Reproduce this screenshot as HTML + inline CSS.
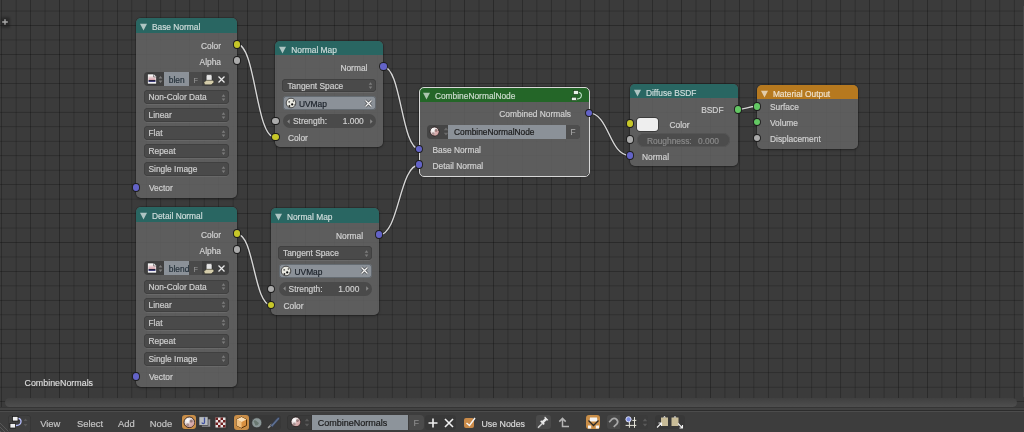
<!DOCTYPE html><html><head><meta charset="utf-8"><style>html,body{margin:0;padding:0}body{width:1024px;height:432px;overflow:hidden;position:relative;background:#3b3b3b;font-family:"Liberation Sans", sans-serif;-webkit-font-smoothing:antialiased}</style></head><body><div style="position:absolute;left:0;top:0;width:1024px;height:432px;will-change:transform">
<svg style="position:absolute;left:0;top:0" width="1024" height="432" shape-rendering="crispEdges"><rect x="-14" y="0" width="1" height="412" fill="#000" fill-opacity="0.044"/><rect x="-13" y="0" width="1" height="412" fill="#000" fill-opacity="0.146"/><rect x="1" y="0" width="1" height="412" fill="#000" fill-opacity="0.225"/><rect x="15" y="0" width="1" height="412" fill="#000" fill-opacity="0.060"/><rect x="16" y="0" width="1" height="412" fill="#000" fill-opacity="0.122"/><rect x="30" y="0" width="1" height="412" fill="#000" fill-opacity="0.256"/><rect x="44" y="0" width="1" height="412" fill="#000" fill-opacity="0.079"/><rect x="45" y="0" width="1" height="412" fill="#000" fill-opacity="0.099"/><rect x="59" y="0" width="1" height="412" fill="#000" fill-opacity="0.288"/><rect x="73" y="0" width="1" height="412" fill="#000" fill-opacity="0.099"/><rect x="74" y="0" width="1" height="412" fill="#000" fill-opacity="0.079"/><rect x="88" y="0" width="1" height="412" fill="#000" fill-opacity="0.256"/><rect x="102" y="0" width="1" height="412" fill="#000" fill-opacity="0.122"/><rect x="103" y="0" width="1" height="412" fill="#000" fill-opacity="0.060"/><rect x="117" y="0" width="1" height="412" fill="#000" fill-opacity="0.225"/><rect x="131" y="0" width="1" height="412" fill="#000" fill-opacity="0.146"/><rect x="132" y="0" width="1" height="412" fill="#000" fill-opacity="0.044"/><rect x="145" y="0" width="1" height="412" fill="#000" fill-opacity="0.019"/><rect x="146" y="0" width="1" height="412" fill="#000" fill-opacity="0.196"/><rect x="160" y="0" width="1" height="412" fill="#000" fill-opacity="0.172"/><rect x="161" y="0" width="1" height="412" fill="#000" fill-opacity="0.030"/><rect x="174" y="0" width="1" height="412" fill="#000" fill-opacity="0.032"/><rect x="175" y="0" width="1" height="412" fill="#000" fill-opacity="0.168"/><rect x="189" y="0" width="1" height="412" fill="#000" fill-opacity="0.200"/><rect x="190" y="0" width="1" height="412" fill="#000" fill-opacity="0.018"/><rect x="203" y="0" width="1" height="412" fill="#000" fill-opacity="0.046"/><rect x="204" y="0" width="1" height="412" fill="#000" fill-opacity="0.142"/><rect x="218" y="0" width="1" height="412" fill="#000" fill-opacity="0.229"/><rect x="232" y="0" width="1" height="412" fill="#000" fill-opacity="0.063"/><rect x="233" y="0" width="1" height="412" fill="#000" fill-opacity="0.118"/><rect x="247" y="0" width="1" height="412" fill="#000" fill-opacity="0.260"/><rect x="261" y="0" width="1" height="412" fill="#000" fill-opacity="0.082"/><rect x="262" y="0" width="1" height="412" fill="#000" fill-opacity="0.096"/><rect x="276" y="0" width="1" height="412" fill="#000" fill-opacity="0.283"/><rect x="290" y="0" width="1" height="412" fill="#000" fill-opacity="0.102"/><rect x="291" y="0" width="1" height="412" fill="#000" fill-opacity="0.076"/><rect x="305" y="0" width="1" height="412" fill="#000" fill-opacity="0.251"/><rect x="319" y="0" width="1" height="412" fill="#000" fill-opacity="0.125"/><rect x="320" y="0" width="1" height="412" fill="#000" fill-opacity="0.058"/><rect x="333" y="0" width="1" height="412" fill="#000" fill-opacity="0.011"/><rect x="334" y="0" width="1" height="412" fill="#000" fill-opacity="0.220"/><rect x="348" y="0" width="1" height="412" fill="#000" fill-opacity="0.150"/><rect x="349" y="0" width="1" height="412" fill="#000" fill-opacity="0.042"/><rect x="362" y="0" width="1" height="412" fill="#000" fill-opacity="0.021"/><rect x="363" y="0" width="1" height="412" fill="#000" fill-opacity="0.191"/><rect x="377" y="0" width="1" height="412" fill="#000" fill-opacity="0.176"/><rect x="378" y="0" width="1" height="412" fill="#000" fill-opacity="0.028"/><rect x="391" y="0" width="1" height="412" fill="#000" fill-opacity="0.033"/><rect x="392" y="0" width="1" height="412" fill="#000" fill-opacity="0.164"/><rect x="406" y="0" width="1" height="412" fill="#000" fill-opacity="0.204"/><rect x="407" y="0" width="1" height="412" fill="#000" fill-opacity="0.016"/><rect x="420" y="0" width="1" height="412" fill="#000" fill-opacity="0.048"/><rect x="421" y="0" width="1" height="412" fill="#000" fill-opacity="0.139"/><rect x="435" y="0" width="1" height="412" fill="#000" fill-opacity="0.234"/><rect x="449" y="0" width="1" height="412" fill="#000" fill-opacity="0.065"/><rect x="450" y="0" width="1" height="412" fill="#000" fill-opacity="0.115"/><rect x="464" y="0" width="1" height="412" fill="#000" fill-opacity="0.265"/><rect x="478" y="0" width="1" height="412" fill="#000" fill-opacity="0.085"/><rect x="479" y="0" width="1" height="412" fill="#000" fill-opacity="0.093"/><rect x="493" y="0" width="1" height="412" fill="#000" fill-opacity="0.278"/><rect x="507" y="0" width="1" height="412" fill="#000" fill-opacity="0.106"/><rect x="508" y="0" width="1" height="412" fill="#000" fill-opacity="0.073"/><rect x="522" y="0" width="1" height="412" fill="#000" fill-opacity="0.246"/><rect x="536" y="0" width="1" height="412" fill="#000" fill-opacity="0.129"/><rect x="537" y="0" width="1" height="412" fill="#000" fill-opacity="0.055"/><rect x="550" y="0" width="1" height="412" fill="#000" fill-opacity="0.012"/><rect x="551" y="0" width="1" height="412" fill="#000" fill-opacity="0.216"/><rect x="565" y="0" width="1" height="412" fill="#000" fill-opacity="0.153"/><rect x="566" y="0" width="1" height="412" fill="#000" fill-opacity="0.039"/><rect x="579" y="0" width="1" height="412" fill="#000" fill-opacity="0.023"/><rect x="580" y="0" width="1" height="412" fill="#000" fill-opacity="0.187"/><rect x="594" y="0" width="1" height="412" fill="#000" fill-opacity="0.180"/><rect x="595" y="0" width="1" height="412" fill="#000" fill-opacity="0.026"/><rect x="608" y="0" width="1" height="412" fill="#000" fill-opacity="0.036"/><rect x="609" y="0" width="1" height="412" fill="#000" fill-opacity="0.160"/><rect x="623" y="0" width="1" height="412" fill="#000" fill-opacity="0.208"/><rect x="624" y="0" width="1" height="412" fill="#000" fill-opacity="0.015"/><rect x="637" y="0" width="1" height="412" fill="#000" fill-opacity="0.051"/><rect x="638" y="0" width="1" height="412" fill="#000" fill-opacity="0.135"/><rect x="652" y="0" width="1" height="412" fill="#000" fill-opacity="0.238"/><rect x="666" y="0" width="1" height="412" fill="#000" fill-opacity="0.068"/><rect x="667" y="0" width="1" height="412" fill="#000" fill-opacity="0.111"/><rect x="681" y="0" width="1" height="412" fill="#000" fill-opacity="0.270"/><rect x="695" y="0" width="1" height="412" fill="#000" fill-opacity="0.087"/><rect x="696" y="0" width="1" height="412" fill="#000" fill-opacity="0.090"/><rect x="710" y="0" width="1" height="412" fill="#000" fill-opacity="0.274"/><rect x="724" y="0" width="1" height="412" fill="#000" fill-opacity="0.109"/><rect x="725" y="0" width="1" height="412" fill="#000" fill-opacity="0.070"/><rect x="739" y="0" width="1" height="412" fill="#000" fill-opacity="0.242"/><rect x="753" y="0" width="1" height="412" fill="#000" fill-opacity="0.132"/><rect x="754" y="0" width="1" height="412" fill="#000" fill-opacity="0.053"/><rect x="767" y="0" width="1" height="412" fill="#000" fill-opacity="0.014"/><rect x="768" y="0" width="1" height="412" fill="#000" fill-opacity="0.212"/><rect x="782" y="0" width="1" height="412" fill="#000" fill-opacity="0.157"/><rect x="783" y="0" width="1" height="412" fill="#000" fill-opacity="0.037"/><rect x="796" y="0" width="1" height="412" fill="#000" fill-opacity="0.024"/><rect x="797" y="0" width="1" height="412" fill="#000" fill-opacity="0.183"/><rect x="811" y="0" width="1" height="412" fill="#000" fill-opacity="0.184"/><rect x="812" y="0" width="1" height="412" fill="#000" fill-opacity="0.024"/><rect x="825" y="0" width="1" height="412" fill="#000" fill-opacity="0.038"/><rect x="826" y="0" width="1" height="412" fill="#000" fill-opacity="0.156"/><rect x="840" y="0" width="1" height="412" fill="#000" fill-opacity="0.212"/><rect x="841" y="0" width="1" height="412" fill="#000" fill-opacity="0.013"/><rect x="854" y="0" width="1" height="412" fill="#000" fill-opacity="0.053"/><rect x="855" y="0" width="1" height="412" fill="#000" fill-opacity="0.131"/><rect x="869" y="0" width="1" height="412" fill="#000" fill-opacity="0.243"/><rect x="883" y="0" width="1" height="412" fill="#000" fill-opacity="0.071"/><rect x="884" y="0" width="1" height="412" fill="#000" fill-opacity="0.108"/><rect x="898" y="0" width="1" height="412" fill="#000" fill-opacity="0.275"/><rect x="912" y="0" width="1" height="412" fill="#000" fill-opacity="0.091"/><rect x="913" y="0" width="1" height="412" fill="#000" fill-opacity="0.087"/><rect x="927" y="0" width="1" height="412" fill="#000" fill-opacity="0.269"/><rect x="941" y="0" width="1" height="412" fill="#000" fill-opacity="0.112"/><rect x="942" y="0" width="1" height="412" fill="#000" fill-opacity="0.068"/><rect x="956" y="0" width="1" height="412" fill="#000" fill-opacity="0.237"/><rect x="970" y="0" width="1" height="412" fill="#000" fill-opacity="0.136"/><rect x="971" y="0" width="1" height="412" fill="#000" fill-opacity="0.050"/><rect x="984" y="0" width="1" height="412" fill="#000" fill-opacity="0.015"/><rect x="985" y="0" width="1" height="412" fill="#000" fill-opacity="0.207"/><rect x="999" y="0" width="1" height="412" fill="#000" fill-opacity="0.161"/><rect x="1000" y="0" width="1" height="412" fill="#000" fill-opacity="0.035"/><rect x="1013" y="0" width="1" height="412" fill="#000" fill-opacity="0.026"/><rect x="1014" y="0" width="1" height="412" fill="#000" fill-opacity="0.179"/><rect x="0" y="-4" width="1024" height="1" fill="#000" fill-opacity="0.256"/><rect x="0" y="10" width="1024" height="1" fill="#000" fill-opacity="0.079"/><rect x="0" y="11" width="1024" height="1" fill="#000" fill-opacity="0.099"/><rect x="0" y="25" width="1024" height="1" fill="#000" fill-opacity="0.288"/><rect x="0" y="39" width="1024" height="1" fill="#000" fill-opacity="0.099"/><rect x="0" y="40" width="1024" height="1" fill="#000" fill-opacity="0.079"/><rect x="0" y="54" width="1024" height="1" fill="#000" fill-opacity="0.256"/><rect x="0" y="68" width="1024" height="1" fill="#000" fill-opacity="0.122"/><rect x="0" y="69" width="1024" height="1" fill="#000" fill-opacity="0.060"/><rect x="0" y="83" width="1024" height="1" fill="#000" fill-opacity="0.225"/><rect x="0" y="97" width="1024" height="1" fill="#000" fill-opacity="0.146"/><rect x="0" y="98" width="1024" height="1" fill="#000" fill-opacity="0.044"/><rect x="0" y="111" width="1024" height="1" fill="#000" fill-opacity="0.019"/><rect x="0" y="112" width="1024" height="1" fill="#000" fill-opacity="0.196"/><rect x="0" y="126" width="1024" height="1" fill="#000" fill-opacity="0.172"/><rect x="0" y="127" width="1024" height="1" fill="#000" fill-opacity="0.030"/><rect x="0" y="140" width="1024" height="1" fill="#000" fill-opacity="0.032"/><rect x="0" y="141" width="1024" height="1" fill="#000" fill-opacity="0.168"/><rect x="0" y="155" width="1024" height="1" fill="#000" fill-opacity="0.200"/><rect x="0" y="156" width="1024" height="1" fill="#000" fill-opacity="0.018"/><rect x="0" y="169" width="1024" height="1" fill="#000" fill-opacity="0.046"/><rect x="0" y="170" width="1024" height="1" fill="#000" fill-opacity="0.142"/><rect x="0" y="184" width="1024" height="1" fill="#000" fill-opacity="0.229"/><rect x="0" y="198" width="1024" height="1" fill="#000" fill-opacity="0.063"/><rect x="0" y="199" width="1024" height="1" fill="#000" fill-opacity="0.118"/><rect x="0" y="213" width="1024" height="1" fill="#000" fill-opacity="0.260"/><rect x="0" y="227" width="1024" height="1" fill="#000" fill-opacity="0.082"/><rect x="0" y="228" width="1024" height="1" fill="#000" fill-opacity="0.096"/><rect x="0" y="242" width="1024" height="1" fill="#000" fill-opacity="0.283"/><rect x="0" y="256" width="1024" height="1" fill="#000" fill-opacity="0.102"/><rect x="0" y="257" width="1024" height="1" fill="#000" fill-opacity="0.076"/><rect x="0" y="271" width="1024" height="1" fill="#000" fill-opacity="0.251"/><rect x="0" y="285" width="1024" height="1" fill="#000" fill-opacity="0.125"/><rect x="0" y="286" width="1024" height="1" fill="#000" fill-opacity="0.058"/><rect x="0" y="299" width="1024" height="1" fill="#000" fill-opacity="0.011"/><rect x="0" y="300" width="1024" height="1" fill="#000" fill-opacity="0.220"/><rect x="0" y="314" width="1024" height="1" fill="#000" fill-opacity="0.150"/><rect x="0" y="315" width="1024" height="1" fill="#000" fill-opacity="0.042"/><rect x="0" y="328" width="1024" height="1" fill="#000" fill-opacity="0.021"/><rect x="0" y="329" width="1024" height="1" fill="#000" fill-opacity="0.191"/><rect x="0" y="343" width="1024" height="1" fill="#000" fill-opacity="0.176"/><rect x="0" y="344" width="1024" height="1" fill="#000" fill-opacity="0.028"/><rect x="0" y="357" width="1024" height="1" fill="#000" fill-opacity="0.033"/><rect x="0" y="358" width="1024" height="1" fill="#000" fill-opacity="0.164"/><rect x="0" y="372" width="1024" height="1" fill="#000" fill-opacity="0.204"/><rect x="0" y="373" width="1024" height="1" fill="#000" fill-opacity="0.016"/><rect x="0" y="386" width="1024" height="1" fill="#000" fill-opacity="0.048"/><rect x="0" y="387" width="1024" height="1" fill="#000" fill-opacity="0.139"/><rect x="0" y="401" width="1024" height="1" fill="#000" fill-opacity="0.234"/></svg>
<svg style="position:absolute;left:0;top:0" width="1024" height="432"><path d="M236.8 44 C255.75 44 255.75 137.2 274.7 137.2" stroke="#222" stroke-width="2.6" fill="none" opacity="0.5"/><path d="M236.8 44 C255.75 44 255.75 137.2 274.7 137.2" stroke="#d6d6d6" stroke-width="1.4" fill="none"/><path d="M237 234 C254.0 234 254.0 305 271 305" stroke="#222" stroke-width="2.6" fill="none" opacity="0.5"/><path d="M237 234 C254.0 234 254.0 305 271 305" stroke="#d6d6d6" stroke-width="1.4" fill="none"/><path d="M383.3 66.7 C401.35 66.7 401.35 149.2 419.4 149.2" stroke="#222" stroke-width="2.6" fill="none" opacity="0.5"/><path d="M383.3 66.7 C401.35 66.7 401.35 149.2 419.4 149.2" stroke="#d6d6d6" stroke-width="1.4" fill="none"/><path d="M379 235 C399.2 235 399.2 164.7 419.4 164.7" stroke="#222" stroke-width="2.6" fill="none" opacity="0.5"/><path d="M379 235 C399.2 235 399.2 164.7 419.4 164.7" stroke="#d6d6d6" stroke-width="1.4" fill="none"/><path d="M588.6 112.9 C609.1500000000001 112.9 609.1500000000001 155.6 629.7 155.6" stroke="#222" stroke-width="2.6" fill="none" opacity="0.5"/><path d="M588.6 112.9 C609.1500000000001 112.9 609.1500000000001 155.6 629.7 155.6" stroke="#d6d6d6" stroke-width="1.4" fill="none"/><path d="M737.9 109.3 C747.15 109.3 747.15 106.5 756.4 106.5" stroke="#222" stroke-width="2.6" fill="none" opacity="0.5"/><path d="M737.9 109.3 C747.15 109.3 747.15 106.5 756.4 106.5" stroke="#d6d6d6" stroke-width="1.4" fill="none"/></svg>
<div style="position:absolute;left:136px;top:18.3px;width:101px;height:179.5px;border-radius:5px;box-shadow:0 0 0 0.8px rgba(20,20,20,0.35),0 1px 3px rgba(0,0,0,0.3);background:rgba(103,103,103,0.8)"></div>
<div style="position:absolute;left:136px;top:18.3px;width:101px;height:14.5px;border-radius:5px 5px 0 0;background:#296662"></div>
<svg style="position:absolute;left:139px;top:22.3px" width="10" height="10"><path d="M1 1.8 L8 1.8 L4.5 8.4 Z" fill="#cfdddc" opacity="0.8"/></svg>
<div style="position:absolute;left:151.9px;top:23.2px;font-size:8.4px;line-height:8.4px;color:#cfdddc;white-space:nowrap;-webkit-text-stroke:0.18px #cfdddc;">Base Normal</div>
<div style="position:absolute;right:803px;top:41.599999999999994px;font-size:8.4px;line-height:8.4px;color:#d2d2d2;white-space:nowrap;text-align:right;-webkit-text-stroke:0.18px #d2d2d2;">Color</div>
<div style="position:absolute;right:803px;top:57.599999999999994px;font-size:8.4px;line-height:8.4px;color:#d2d2d2;white-space:nowrap;text-align:right;-webkit-text-stroke:0.18px #d2d2d2;">Alpha</div>
<div style="position:absolute;left:233.7px;top:41.0px;width:6.6px;height:6.6px;border-radius:50%;background:#c7c729;box-shadow:0 0 0 0.9px #1c1c1c"></div>
<div style="position:absolute;left:233.7px;top:57.0px;width:6.6px;height:6.6px;border-radius:50%;background:#ababab;box-shadow:0 0 0 0.9px #1c1c1c"></div>
<div style="position:absolute;left:143.5px;top:72.3px;width:85.5px;height:13.5px;border-radius:4px;background:#3f3f3f"></div>
<div style="position:absolute;left:164.0px;top:72.3px;width:25px;height:13.5px;background:#8b9198"></div>
<div style="position:absolute;left:168.8px;top:75.69999999999999px;font-size:8.4px;line-height:8.4px;color:#24303a;white-space:nowrap;-webkit-text-stroke:0.18px #24303a;">blen</div>
<div style="position:absolute;left:189.0px;top:72.3px;width:13px;height:13.5px;background:#4a4a4a"></div>
<div style="position:absolute;left:193.5px;top:76.5px;font-size:7.4px;line-height:7.4px;color:#9a9a9a;white-space:nowrap;-webkit-text-stroke:0.18px #9a9a9a;-webkit-text-stroke:0">F</div>
<svg style="position:absolute;left:146.0px;top:73.3px" width="12" height="12"><defs><linearGradient id="ig72" x1="0" y1="0" x2="0" y2="1"><stop offset="0" stop-color="#f4e8e8"/><stop offset="0.5" stop-color="#d8a8b0"/><stop offset="0.62" stop-color="#1a1a30"/><stop offset="0.8" stop-color="#404080"/><stop offset="0.85" stop-color="#f0f0f4"/></linearGradient></defs><path d="M1.5 1 H7.5 L10.5 4 V11 H1.5 Z" fill="#f4f4f4" stroke="#222" stroke-width="0.6"/><rect x="2.5" y="3" width="7" height="7" fill="url(#ig72)"/><path d="M7.5 1 V4 H10.5" fill="#ddd" stroke="#444" stroke-width="0.5"/></svg>
<svg style="position:absolute;left:157.5px;top:74.8px" width="5" height="9"><path d="M0.6 3.6 L2.5 1 L4.4 3.6 Z M0.6 5.4 L2.5 8 L4.4 5.4 Z" fill="#7e7e7e"/></svg>
<svg style="position:absolute;left:203.0px;top:72.8px" width="12" height="13"><path d="M3.2 7.8 L3.2 3 Q3.2 1.6 4.6 1.6 L7.6 1.6 Q9 1.6 9 3 L9 7.8 Z" fill="#e4e4e4" stroke="#222" stroke-width="0.5"/><path d="M0.8 9.3 L3.5 7.3 L9.8 7.3 L11.2 9 L8.2 11.8 L1.8 11.8 Z" fill="#d4ccaa" stroke="#2a2a20" stroke-width="0.5"/></svg>
<svg style="position:absolute;left:217.0px;top:74.6px" width="9" height="9"><path d="M1.5 1.5 L7.5 7.5 M7.5 1.5 L1.5 7.5" stroke="#e8e8e8" stroke-width="1.3"/></svg>
<div style="position:absolute;left:143.5px;top:90.3px;width:85.5px;height:14.0px;border-radius:4px;background:#4a4a4a;box-shadow:inset 0 0 0 0.7px #3e3e3e,0 1px 0 rgba(255,255,255,0.07)"></div>
<div style="position:absolute;left:148.5px;top:93.3px;font-size:8.4px;line-height:8.4px;color:#d0d0d0;white-space:nowrap;-webkit-text-stroke:0.18px #d0d0d0;">Non-Color Data</div>
<svg style="position:absolute;left:221.2px;top:92.8px" width="5" height="9"><path d="M0.7 3.7 L2.5 1.2 L4.3 3.7 Z M0.7 5.5 L2.5 8 L4.3 5.5 Z" fill="#7c7c7c"/></svg>
<div style="position:absolute;left:143.5px;top:108.3px;width:85.5px;height:14.0px;border-radius:4px;background:#4a4a4a;box-shadow:inset 0 0 0 0.7px #3e3e3e,0 1px 0 rgba(255,255,255,0.07)"></div>
<div style="position:absolute;left:148.5px;top:111.3px;font-size:8.4px;line-height:8.4px;color:#d0d0d0;white-space:nowrap;-webkit-text-stroke:0.18px #d0d0d0;">Linear</div>
<svg style="position:absolute;left:221.2px;top:110.8px" width="5" height="9"><path d="M0.7 3.7 L2.5 1.2 L4.3 3.7 Z M0.7 5.5 L2.5 8 L4.3 5.5 Z" fill="#7c7c7c"/></svg>
<div style="position:absolute;left:143.5px;top:126.3px;width:85.5px;height:14.0px;border-radius:4px;background:#4a4a4a;box-shadow:inset 0 0 0 0.7px #3e3e3e,0 1px 0 rgba(255,255,255,0.07)"></div>
<div style="position:absolute;left:148.5px;top:129.3px;font-size:8.4px;line-height:8.4px;color:#d0d0d0;white-space:nowrap;-webkit-text-stroke:0.18px #d0d0d0;">Flat</div>
<svg style="position:absolute;left:221.2px;top:128.8px" width="5" height="9"><path d="M0.7 3.7 L2.5 1.2 L4.3 3.7 Z M0.7 5.5 L2.5 8 L4.3 5.5 Z" fill="#7c7c7c"/></svg>
<div style="position:absolute;left:143.5px;top:144.3px;width:85.5px;height:14.0px;border-radius:4px;background:#4a4a4a;box-shadow:inset 0 0 0 0.7px #3e3e3e,0 1px 0 rgba(255,255,255,0.07)"></div>
<div style="position:absolute;left:148.5px;top:147.3px;font-size:8.4px;line-height:8.4px;color:#d0d0d0;white-space:nowrap;-webkit-text-stroke:0.18px #d0d0d0;">Repeat</div>
<svg style="position:absolute;left:221.2px;top:146.8px" width="5" height="9"><path d="M0.7 3.7 L2.5 1.2 L4.3 3.7 Z M0.7 5.5 L2.5 8 L4.3 5.5 Z" fill="#7c7c7c"/></svg>
<div style="position:absolute;left:143.5px;top:162.3px;width:85.5px;height:14.0px;border-radius:4px;background:#4a4a4a;box-shadow:inset 0 0 0 0.7px #3e3e3e,0 1px 0 rgba(255,255,255,0.07)"></div>
<div style="position:absolute;left:148.5px;top:165.3px;font-size:8.4px;line-height:8.4px;color:#d0d0d0;white-space:nowrap;-webkit-text-stroke:0.18px #d0d0d0;">Single Image</div>
<svg style="position:absolute;left:221.2px;top:164.8px" width="5" height="9"><path d="M0.7 3.7 L2.5 1.2 L4.3 3.7 Z M0.7 5.5 L2.5 8 L4.3 5.5 Z" fill="#7c7c7c"/></svg>
<div style="position:absolute;left:149px;top:183.90000000000003px;font-size:8.4px;line-height:8.4px;color:#d2d2d2;white-space:nowrap;-webkit-text-stroke:0.18px #d2d2d2;">Vector</div>
<div style="position:absolute;left:132.7px;top:184.0px;width:6.6px;height:6.6px;border-radius:50%;background:#6363c7;box-shadow:0 0 0 0.9px #1c1c1c"></div>
<div style="position:absolute;left:136px;top:207.3px;width:101px;height:179.5px;border-radius:5px;box-shadow:0 0 0 0.8px rgba(20,20,20,0.35),0 1px 3px rgba(0,0,0,0.3);background:rgba(103,103,103,0.8)"></div>
<div style="position:absolute;left:136px;top:207.3px;width:101px;height:14.5px;border-radius:5px 5px 0 0;background:#296662"></div>
<svg style="position:absolute;left:139px;top:211.3px" width="10" height="10"><path d="M1 1.8 L8 1.8 L4.5 8.4 Z" fill="#cfdddc" opacity="0.8"/></svg>
<div style="position:absolute;left:151.9px;top:212.20000000000002px;font-size:8.4px;line-height:8.4px;color:#cfdddc;white-space:nowrap;-webkit-text-stroke:0.18px #cfdddc;">Detail Normal</div>
<div style="position:absolute;right:803px;top:230.60000000000002px;font-size:8.4px;line-height:8.4px;color:#d2d2d2;white-space:nowrap;text-align:right;-webkit-text-stroke:0.18px #d2d2d2;">Color</div>
<div style="position:absolute;right:803px;top:246.60000000000002px;font-size:8.4px;line-height:8.4px;color:#d2d2d2;white-space:nowrap;text-align:right;-webkit-text-stroke:0.18px #d2d2d2;">Alpha</div>
<div style="position:absolute;left:233.7px;top:230.0px;width:6.6px;height:6.6px;border-radius:50%;background:#c7c729;box-shadow:0 0 0 0.9px #1c1c1c"></div>
<div style="position:absolute;left:233.7px;top:246.0px;width:6.6px;height:6.6px;border-radius:50%;background:#ababab;box-shadow:0 0 0 0.9px #1c1c1c"></div>
<div style="position:absolute;left:143.5px;top:261.3px;width:85.5px;height:13.5px;border-radius:4px;background:#3f3f3f"></div>
<div style="position:absolute;left:164.0px;top:261.3px;width:25px;height:13.5px;background:#8b9198"></div>
<div style="position:absolute;left:168.8px;top:264.70000000000005px;font-size:8.4px;line-height:8.4px;color:#24303a;white-space:nowrap;-webkit-text-stroke:0.18px #24303a;">blend</div>
<div style="position:absolute;left:189.0px;top:261.3px;width:13px;height:13.5px;background:#4a4a4a"></div>
<div style="position:absolute;left:193.5px;top:265.5px;font-size:7.4px;line-height:7.4px;color:#9a9a9a;white-space:nowrap;-webkit-text-stroke:0.18px #9a9a9a;-webkit-text-stroke:0">F</div>
<svg style="position:absolute;left:146.0px;top:262.3px" width="12" height="12"><defs><linearGradient id="ig261" x1="0" y1="0" x2="0" y2="1"><stop offset="0" stop-color="#f4e8e8"/><stop offset="0.5" stop-color="#d8a8b0"/><stop offset="0.62" stop-color="#1a1a30"/><stop offset="0.8" stop-color="#404080"/><stop offset="0.85" stop-color="#f0f0f4"/></linearGradient></defs><path d="M1.5 1 H7.5 L10.5 4 V11 H1.5 Z" fill="#f4f4f4" stroke="#222" stroke-width="0.6"/><rect x="2.5" y="3" width="7" height="7" fill="url(#ig261)"/><path d="M7.5 1 V4 H10.5" fill="#ddd" stroke="#444" stroke-width="0.5"/></svg>
<svg style="position:absolute;left:157.5px;top:263.8px" width="5" height="9"><path d="M0.6 3.6 L2.5 1 L4.4 3.6 Z M0.6 5.4 L2.5 8 L4.4 5.4 Z" fill="#7e7e7e"/></svg>
<svg style="position:absolute;left:203.0px;top:261.8px" width="12" height="13"><path d="M3.2 7.8 L3.2 3 Q3.2 1.6 4.6 1.6 L7.6 1.6 Q9 1.6 9 3 L9 7.8 Z" fill="#e4e4e4" stroke="#222" stroke-width="0.5"/><path d="M0.8 9.3 L3.5 7.3 L9.8 7.3 L11.2 9 L8.2 11.8 L1.8 11.8 Z" fill="#d4ccaa" stroke="#2a2a20" stroke-width="0.5"/></svg>
<svg style="position:absolute;left:217.0px;top:263.6px" width="9" height="9"><path d="M1.5 1.5 L7.5 7.5 M7.5 1.5 L1.5 7.5" stroke="#e8e8e8" stroke-width="1.3"/></svg>
<div style="position:absolute;left:143.5px;top:279.90000000000003px;width:85.5px;height:14.0px;border-radius:4px;background:#4a4a4a;box-shadow:inset 0 0 0 0.7px #3e3e3e,0 1px 0 rgba(255,255,255,0.07)"></div>
<div style="position:absolute;left:148.5px;top:282.90000000000003px;font-size:8.4px;line-height:8.4px;color:#d0d0d0;white-space:nowrap;-webkit-text-stroke:0.18px #d0d0d0;">Non-Color Data</div>
<svg style="position:absolute;left:221.2px;top:282.40000000000003px" width="5" height="9"><path d="M0.7 3.7 L2.5 1.2 L4.3 3.7 Z M0.7 5.5 L2.5 8 L4.3 5.5 Z" fill="#7c7c7c"/></svg>
<div style="position:absolute;left:143.5px;top:297.90000000000003px;width:85.5px;height:14.0px;border-radius:4px;background:#4a4a4a;box-shadow:inset 0 0 0 0.7px #3e3e3e,0 1px 0 rgba(255,255,255,0.07)"></div>
<div style="position:absolute;left:148.5px;top:300.90000000000003px;font-size:8.4px;line-height:8.4px;color:#d0d0d0;white-space:nowrap;-webkit-text-stroke:0.18px #d0d0d0;">Linear</div>
<svg style="position:absolute;left:221.2px;top:300.40000000000003px" width="5" height="9"><path d="M0.7 3.7 L2.5 1.2 L4.3 3.7 Z M0.7 5.5 L2.5 8 L4.3 5.5 Z" fill="#7c7c7c"/></svg>
<div style="position:absolute;left:143.5px;top:315.90000000000003px;width:85.5px;height:14.0px;border-radius:4px;background:#4a4a4a;box-shadow:inset 0 0 0 0.7px #3e3e3e,0 1px 0 rgba(255,255,255,0.07)"></div>
<div style="position:absolute;left:148.5px;top:318.90000000000003px;font-size:8.4px;line-height:8.4px;color:#d0d0d0;white-space:nowrap;-webkit-text-stroke:0.18px #d0d0d0;">Flat</div>
<svg style="position:absolute;left:221.2px;top:318.40000000000003px" width="5" height="9"><path d="M0.7 3.7 L2.5 1.2 L4.3 3.7 Z M0.7 5.5 L2.5 8 L4.3 5.5 Z" fill="#7c7c7c"/></svg>
<div style="position:absolute;left:143.5px;top:333.90000000000003px;width:85.5px;height:14.0px;border-radius:4px;background:#4a4a4a;box-shadow:inset 0 0 0 0.7px #3e3e3e,0 1px 0 rgba(255,255,255,0.07)"></div>
<div style="position:absolute;left:148.5px;top:336.90000000000003px;font-size:8.4px;line-height:8.4px;color:#d0d0d0;white-space:nowrap;-webkit-text-stroke:0.18px #d0d0d0;">Repeat</div>
<svg style="position:absolute;left:221.2px;top:336.40000000000003px" width="5" height="9"><path d="M0.7 3.7 L2.5 1.2 L4.3 3.7 Z M0.7 5.5 L2.5 8 L4.3 5.5 Z" fill="#7c7c7c"/></svg>
<div style="position:absolute;left:143.5px;top:351.90000000000003px;width:85.5px;height:14.0px;border-radius:4px;background:#4a4a4a;box-shadow:inset 0 0 0 0.7px #3e3e3e,0 1px 0 rgba(255,255,255,0.07)"></div>
<div style="position:absolute;left:148.5px;top:354.90000000000003px;font-size:8.4px;line-height:8.4px;color:#d0d0d0;white-space:nowrap;-webkit-text-stroke:0.18px #d0d0d0;">Single Image</div>
<svg style="position:absolute;left:221.2px;top:354.40000000000003px" width="5" height="9"><path d="M0.7 3.7 L2.5 1.2 L4.3 3.7 Z M0.7 5.5 L2.5 8 L4.3 5.5 Z" fill="#7c7c7c"/></svg>
<div style="position:absolute;left:149px;top:372.90000000000003px;font-size:8.4px;line-height:8.4px;color:#d2d2d2;white-space:nowrap;-webkit-text-stroke:0.18px #d2d2d2;">Vector</div>
<div style="position:absolute;left:132.7px;top:373.0px;width:6.6px;height:6.6px;border-radius:50%;background:#6363c7;box-shadow:0 0 0 0.9px #1c1c1c"></div>
<div style="position:absolute;left:275.4px;top:40.6px;width:108px;height:106.5px;border-radius:5px;box-shadow:0 0 0 0.8px rgba(20,20,20,0.35),0 1px 3px rgba(0,0,0,0.3);background:rgba(103,103,103,0.8)"></div>
<div style="position:absolute;left:275.4px;top:40.6px;width:108px;height:14.5px;border-radius:5px 5px 0 0;background:#296662"></div>
<svg style="position:absolute;left:278.4px;top:44.6px" width="10" height="10"><path d="M1 1.8 L8 1.8 L4.5 8.4 Z" fill="#cfdddc" opacity="0.8"/></svg>
<div style="position:absolute;left:291.29999999999995px;top:45.5px;font-size:8.4px;line-height:8.4px;color:#cfdddc;white-space:nowrap;-webkit-text-stroke:0.18px #cfdddc;">Normal Map</div>
<div style="position:absolute;right:656.6px;top:63.9px;font-size:8.4px;line-height:8.4px;color:#d2d2d2;white-space:nowrap;text-align:right;-webkit-text-stroke:0.18px #d2d2d2;">Normal</div>
<div style="position:absolute;left:380.09999999999997px;top:63.3px;width:6.6px;height:6.6px;border-radius:50%;background:#6363c7;box-shadow:0 0 0 0.9px #1c1c1c"></div>
<div style="position:absolute;left:282.4px;top:78.6px;width:93.5px;height:13.8px;border-radius:4px;background:#4a4a4a;box-shadow:inset 0 0 0 0.7px #3e3e3e,0 1px 0 rgba(255,255,255,0.07)"></div>
<div style="position:absolute;left:287.4px;top:81.6px;font-size:8.4px;line-height:8.4px;color:#d0d0d0;white-space:nowrap;-webkit-text-stroke:0.18px #d0d0d0;">Tangent Space</div>
<svg style="position:absolute;left:368.09999999999997px;top:81.1px" width="5" height="9"><path d="M0.7 3.7 L2.5 1.2 L4.3 3.7 Z M0.7 5.5 L2.5 8 L4.3 5.5 Z" fill="#7c7c7c"/></svg>
<div style="position:absolute;left:282.9px;top:96.30000000000001px;width:93px;height:13.5px;border-radius:4px;background:#8b9198;box-shadow:inset 0 0 0 0.8px #5a6066"></div>
<div style="position:absolute;left:298.9px;top:99.7px;font-size:8.4px;line-height:8.4px;color:#1a2028;white-space:nowrap;-webkit-text-stroke:0.18px #1a2028;">UVMap</div>
<svg style="position:absolute;left:284.7px;top:97.2px" width="12" height="12" viewBox="-6 -6 12 12"><circle r="4.8" fill="#e8e8e0" stroke="#2a2a2a" stroke-width="0.8"/><circle cx="1.2" cy="1.4" r="1.1" fill="#111"/><circle cx="-1.8" cy="-1.2" r="0.9" fill="#555"/><circle cx="2.4" cy="-2" r="0.8" fill="#333"/><circle cx="-1.6" cy="3" r="0.9" fill="#222"/><circle cx="3.4" cy="1.8" r="0.6" fill="#666"/></svg>
<svg style="position:absolute;left:363.4px;top:97.6px" width="11" height="11"><path d="M2.5 2.5 L8.5 8.5 M8.5 2.5 L2.5 8.5" stroke="#2a2a2a" stroke-width="2.6" opacity="0.7"/><path d="M2.5 2.5 L8.5 8.5 M8.5 2.5 L2.5 8.5" stroke="#f4f4f4" stroke-width="1.3"/></svg>
<div style="position:absolute;left:282.9px;top:114.1px;width:93px;height:13.8px;border-radius:7px;background:#4a4a4a"></div>
<div style="position:absolute;left:293.0px;top:117.39999999999999px;font-size:8.4px;line-height:8.4px;color:#d0d0d0;white-space:nowrap;-webkit-text-stroke:0.18px #d0d0d0;">Strength:</div>
<div style="position:absolute;right:660.3px;top:116.99999999999999px;font-size:8.4px;line-height:8.4px;color:#d0d0d0;white-space:nowrap;text-align:right;-webkit-text-stroke:0.18px #d0d0d0;">1.000</div>
<svg style="position:absolute;left:286.4px;top:117.6px" width="5" height="7"><path d="M3.6 1.2 L1.2 3.5 L3.6 5.8 Z" fill="#8a8a8a"/></svg>
<svg style="position:absolute;left:368.9px;top:117.6px" width="5" height="7"><path d="M1.2 1.2 L3.6 3.5 L1.2 5.8 Z" fill="#8a8a8a"/></svg>
<div style="position:absolute;left:272.09999999999997px;top:117.89999999999999px;width:6.6px;height:6.6px;border-radius:50%;background:#ababab;box-shadow:0 0 0 0.9px #1c1c1c"></div>
<div style="position:absolute;left:287.9px;top:134.0px;font-size:8.4px;line-height:8.4px;color:#d2d2d2;white-space:nowrap;-webkit-text-stroke:0.18px #d2d2d2;">Color</div>
<div style="position:absolute;left:272.09999999999997px;top:133.89999999999998px;width:6.6px;height:6.6px;border-radius:50%;background:#c7c729;box-shadow:0 0 0 0.9px #1c1c1c"></div>
<div style="position:absolute;left:271px;top:208.4px;width:108px;height:106.5px;border-radius:5px;box-shadow:0 0 0 0.8px rgba(20,20,20,0.35),0 1px 3px rgba(0,0,0,0.3);background:rgba(103,103,103,0.8)"></div>
<div style="position:absolute;left:271px;top:208.4px;width:108px;height:14.5px;border-radius:5px 5px 0 0;background:#296662"></div>
<svg style="position:absolute;left:274px;top:212.4px" width="10" height="10"><path d="M1 1.8 L8 1.8 L4.5 8.4 Z" fill="#cfdddc" opacity="0.8"/></svg>
<div style="position:absolute;left:286.9px;top:213.3px;font-size:8.4px;line-height:8.4px;color:#cfdddc;white-space:nowrap;-webkit-text-stroke:0.18px #cfdddc;">Normal Map</div>
<div style="position:absolute;right:661px;top:231.70000000000002px;font-size:8.4px;line-height:8.4px;color:#d2d2d2;white-space:nowrap;text-align:right;-webkit-text-stroke:0.18px #d2d2d2;">Normal</div>
<div style="position:absolute;left:375.7px;top:231.1px;width:6.6px;height:6.6px;border-radius:50%;background:#6363c7;box-shadow:0 0 0 0.9px #1c1c1c"></div>
<div style="position:absolute;left:278px;top:246.4px;width:93.5px;height:13.8px;border-radius:4px;background:#4a4a4a;box-shadow:inset 0 0 0 0.7px #3e3e3e,0 1px 0 rgba(255,255,255,0.07)"></div>
<div style="position:absolute;left:283px;top:249.4px;font-size:8.4px;line-height:8.4px;color:#d0d0d0;white-space:nowrap;-webkit-text-stroke:0.18px #d0d0d0;">Tangent Space</div>
<svg style="position:absolute;left:363.7px;top:248.9px" width="5" height="9"><path d="M0.7 3.7 L2.5 1.2 L4.3 3.7 Z M0.7 5.5 L2.5 8 L4.3 5.5 Z" fill="#7c7c7c"/></svg>
<div style="position:absolute;left:278.5px;top:264.1px;width:93px;height:13.5px;border-radius:4px;background:#8b9198;box-shadow:inset 0 0 0 0.8px #5a6066"></div>
<div style="position:absolute;left:294.5px;top:267.5px;font-size:8.4px;line-height:8.4px;color:#1a2028;white-space:nowrap;-webkit-text-stroke:0.18px #1a2028;">UVMap</div>
<svg style="position:absolute;left:280.3px;top:265.0px" width="12" height="12" viewBox="-6 -6 12 12"><circle r="4.8" fill="#e8e8e0" stroke="#2a2a2a" stroke-width="0.8"/><circle cx="1.2" cy="1.4" r="1.1" fill="#111"/><circle cx="-1.8" cy="-1.2" r="0.9" fill="#555"/><circle cx="2.4" cy="-2" r="0.8" fill="#333"/><circle cx="-1.6" cy="3" r="0.9" fill="#222"/><circle cx="3.4" cy="1.8" r="0.6" fill="#666"/></svg>
<svg style="position:absolute;left:359px;top:265.4px" width="11" height="11"><path d="M2.5 2.5 L8.5 8.5 M8.5 2.5 L2.5 8.5" stroke="#2a2a2a" stroke-width="2.6" opacity="0.7"/><path d="M2.5 2.5 L8.5 8.5 M8.5 2.5 L2.5 8.5" stroke="#f4f4f4" stroke-width="1.3"/></svg>
<div style="position:absolute;left:278.5px;top:281.9px;width:93px;height:13.8px;border-radius:7px;background:#4a4a4a"></div>
<div style="position:absolute;left:288.6px;top:285.2px;font-size:8.4px;line-height:8.4px;color:#d0d0d0;white-space:nowrap;-webkit-text-stroke:0.18px #d0d0d0;">Strength:</div>
<div style="position:absolute;right:664.7px;top:284.8px;font-size:8.4px;line-height:8.4px;color:#d0d0d0;white-space:nowrap;text-align:right;-webkit-text-stroke:0.18px #d0d0d0;">1.000</div>
<svg style="position:absolute;left:282px;top:285.4px" width="5" height="7"><path d="M3.6 1.2 L1.2 3.5 L3.6 5.8 Z" fill="#8a8a8a"/></svg>
<svg style="position:absolute;left:364.5px;top:285.4px" width="5" height="7"><path d="M1.2 1.2 L3.6 3.5 L1.2 5.8 Z" fill="#8a8a8a"/></svg>
<div style="position:absolute;left:267.7px;top:285.7px;width:6.6px;height:6.6px;border-radius:50%;background:#ababab;box-shadow:0 0 0 0.9px #1c1c1c"></div>
<div style="position:absolute;left:283.5px;top:301.8px;font-size:8.4px;line-height:8.4px;color:#d2d2d2;white-space:nowrap;-webkit-text-stroke:0.18px #d2d2d2;">Color</div>
<div style="position:absolute;left:267.7px;top:301.7px;width:6.6px;height:6.6px;border-radius:50%;background:#c7c729;box-shadow:0 0 0 0.9px #1c1c1c"></div>
<div style="position:absolute;left:419px;top:87px;width:170px;height:89px;border-radius:5px;box-shadow:0 0 0 0.8px rgba(20,20,20,0.35),0 1px 3px rgba(0,0,0,0.3);background:rgba(103,103,103,0.8)"></div>
<div style="position:absolute;left:419px;top:87px;width:170px;height:15px;border-radius:5px 5px 0 0;background:#246628"></div>
<div style="position:absolute;left:418.5px;top:86.5px;width:169px;height:88px;border-radius:5px;border:1px solid #d8d8d8"></div>
<svg style="position:absolute;left:422px;top:91px" width="10" height="10"><path d="M1 1.8 L8 1.8 L4.5 8.4 Z" fill="#ceddcf" opacity="0.8"/></svg>
<div style="position:absolute;left:434.9px;top:91.89999999999999px;font-size:8.4px;line-height:8.4px;color:#ceddcf;white-space:nowrap;-webkit-text-stroke:0.18px #ceddcf;">CombineNormalNode</div>
<div style="position:absolute;right:453px;top:110.3px;font-size:8.4px;line-height:8.4px;color:#d2d2d2;white-space:nowrap;text-align:right;-webkit-text-stroke:0.18px #d2d2d2;">Combined Normals</div>
<div style="position:absolute;left:585.7px;top:109.7px;width:6.6px;height:6.6px;border-radius:50%;background:#6363c7;box-shadow:0 0 0 0.9px #1c1c1c"></div>
<div style="position:absolute;left:426.5px;top:124.5px;width:153.5px;height:14px;border-radius:4px;background:#454545"></div>
<div style="position:absolute;left:566px;top:124.5px;width:14px;height:14px;border-radius:0 4px 4px 0;background:#4e4e4e"></div>
<div style="position:absolute;left:448px;top:124.5px;width:118px;height:14px;background:#8b9198"></div>
<div style="position:absolute;left:454px;top:128.20000000000002px;font-size:8.4px;line-height:8.4px;color:#1a1a1a;white-space:nowrap;-webkit-text-stroke:0.18px #1a1a1a;">CombineNormalNode</div>
<div style="position:absolute;left:570.5px;top:128.4px;font-size:8.4px;line-height:8.4px;color:#b0b0b0;white-space:nowrap;-webkit-text-stroke:0.18px #b0b0b0;-webkit-text-stroke:0">F</div>
<svg style="position:absolute;left:429.3px;top:126.30000000000001px" width="11.0" height="11.0" viewBox="-5.5 -5.5 11.0 11.0"><defs><radialGradient id="sg1" cx="35%" cy="30%" r="75%"><stop offset="0" stop-color="#ffffff"/><stop offset="0.45" stop-color="#e4dcdc"/><stop offset="1" stop-color="#b88a8a"/></radialGradient></defs><circle r="4.5" fill="url(#sg1)" stroke="#1e1414" stroke-width="0.8"/><path d="M0 -0.45 L4.2749999999999995 -0.45 A4.5 4.5 0 0 1 0.45 4.2749999999999995 Z" fill="#d8a8a8" opacity="0.75"/><circle cx="1.575" cy="-1.125" r="1.3499999999999999" fill="#5a3030" opacity="0.55"/><circle cx="-1.3499999999999999" cy="2.025" r="1.2600000000000002" fill="#6a4a4a" opacity="0.45"/></svg>
<svg style="position:absolute;left:442.5px;top:126.2px" width="6" height="11"><path d="M0.8 4.3 L3 1.5 L5.2 4.3 Z M0.8 6.7 L3 9.5 L5.2 6.7 Z" fill="#6a6a6a"/></svg>
<svg style="position:absolute;left:571px;top:89px" width="14" height="14"><rect x="2.4" y="1.6" width="5" height="3.8" fill="#e8f0e8" stroke="#103010" stroke-width="0.6"/><rect x="0.5" y="8.2" width="5" height="3.4" fill="#e8f0e8" stroke="#103010" stroke-width="0.6"/><path d="M7.8 3.5 C11.5 3.5 11.5 10 6 10" stroke="#c8e8d0" stroke-width="1.1" fill="none"/></svg>
<div style="position:absolute;left:432.5px;top:145.60000000000002px;font-size:8.4px;line-height:8.4px;color:#d2d2d2;white-space:nowrap;-webkit-text-stroke:0.18px #d2d2d2;">Base Normal</div>
<div style="position:absolute;left:415.7px;top:145.89999999999998px;width:6.6px;height:6.6px;border-radius:50%;background:#6363c7;box-shadow:0 0 0 0.9px #1c1c1c"></div>
<div style="position:absolute;left:432.5px;top:161.9px;font-size:8.4px;line-height:8.4px;color:#d2d2d2;white-space:nowrap;-webkit-text-stroke:0.18px #d2d2d2;">Detail Normal</div>
<div style="position:absolute;left:415.7px;top:161.39999999999998px;width:6.6px;height:6.6px;border-radius:50%;background:#6363c7;box-shadow:0 0 0 0.9px #1c1c1c"></div>
<div style="position:absolute;left:630px;top:84.3px;width:108px;height:82px;border-radius:5px;box-shadow:0 0 0 0.8px rgba(20,20,20,0.35),0 1px 3px rgba(0,0,0,0.3);background:rgba(103,103,103,0.8)"></div>
<div style="position:absolute;left:630px;top:84.3px;width:108px;height:13.5px;border-radius:5px 5px 0 0;background:#296662"></div>
<svg style="position:absolute;left:633px;top:88.3px" width="10" height="10"><path d="M1 1.8 L8 1.8 L4.5 8.4 Z" fill="#cfdddc" opacity="0.8"/></svg>
<div style="position:absolute;left:645.9px;top:89.19999999999999px;font-size:8.4px;line-height:8.4px;color:#cfdddc;white-space:nowrap;-webkit-text-stroke:0.18px #cfdddc;">Diffuse BSDF</div>
<div style="position:absolute;right:300.5px;top:106.1px;font-size:8.4px;line-height:8.4px;color:#d2d2d2;white-space:nowrap;text-align:right;-webkit-text-stroke:0.18px #d2d2d2;">BSDF</div>
<div style="position:absolute;left:734.7px;top:106.0px;width:6.6px;height:6.6px;border-radius:50%;background:#63c763;box-shadow:0 0 0 0.9px #1c1c1c"></div>
<div style="position:absolute;left:637px;top:118.0px;width:20.5px;height:12.5px;border-radius:3px;background:#eeeeee;box-shadow:0 0 0 0.7px #333"></div>
<div style="position:absolute;left:669.5px;top:121.1px;font-size:8.4px;line-height:8.4px;color:#d2d2d2;white-space:nowrap;-webkit-text-stroke:0.18px #d2d2d2;">Color</div>
<div style="position:absolute;left:626.7px;top:120.3px;width:6.6px;height:6.6px;border-radius:50%;background:#c7c729;box-shadow:0 0 0 0.9px #1c1c1c"></div>
<div style="position:absolute;left:637px;top:133.3px;width:93px;height:14px;border-radius:7px;background:#4c4c4c;box-shadow:inset 0 0 0 0.8px #575757"></div>
<div style="position:absolute;left:647px;top:136.8px;font-size:8.4px;line-height:8.4px;color:#8a8a8a;white-space:nowrap;-webkit-text-stroke:0.18px #8a8a8a;">Roughness:</div>
<div style="position:absolute;right:305px;top:136.8px;font-size:8.4px;line-height:8.4px;color:#8a8a8a;white-space:nowrap;text-align:right;-webkit-text-stroke:0.18px #8a8a8a;">0.000</div>
<div style="position:absolute;left:626.7px;top:136.29999999999998px;width:6.6px;height:6.6px;border-radius:50%;background:#ababab;box-shadow:0 0 0 0.9px #1c1c1c"></div>
<div style="position:absolute;left:642px;top:153.10000000000002px;font-size:8.4px;line-height:8.4px;color:#d2d2d2;white-space:nowrap;-webkit-text-stroke:0.18px #d2d2d2;">Normal</div>
<div style="position:absolute;left:626.7px;top:152.29999999999998px;width:6.6px;height:6.6px;border-radius:50%;background:#6363c7;box-shadow:0 0 0 0.9px #1c1c1c"></div>
<div style="position:absolute;left:757px;top:85px;width:101px;height:64px;border-radius:5px;box-shadow:0 0 0 0.8px rgba(20,20,20,0.35),0 1px 3px rgba(0,0,0,0.3);background:rgba(103,103,103,0.8)"></div>
<div style="position:absolute;left:757px;top:85px;width:101px;height:14px;border-radius:5px 5px 0 0;background:#b6791f"></div>
<svg style="position:absolute;left:760px;top:89px" width="10" height="10"><path d="M1 1.8 L8 1.8 L4.5 8.4 Z" fill="#eee1cd" opacity="0.8"/></svg>
<div style="position:absolute;left:772.9px;top:89.89999999999999px;font-size:8.4px;line-height:8.4px;color:#eee1cd;white-space:nowrap;-webkit-text-stroke:0.18px #eee1cd;">Material Output</div>
<div style="position:absolute;left:770px;top:103.1px;font-size:8.4px;line-height:8.4px;color:#d2d2d2;white-space:nowrap;-webkit-text-stroke:0.18px #d2d2d2;">Surface</div>
<div style="position:absolute;left:753.7px;top:103.2px;width:6.6px;height:6.6px;border-radius:50%;background:#63c763;box-shadow:0 0 0 0.9px #1c1c1c"></div>
<div style="position:absolute;left:770px;top:119.0px;font-size:8.4px;line-height:8.4px;color:#d2d2d2;white-space:nowrap;-webkit-text-stroke:0.18px #d2d2d2;">Volume</div>
<div style="position:absolute;left:753.7px;top:118.9px;width:6.6px;height:6.6px;border-radius:50%;background:#63c763;box-shadow:0 0 0 0.9px #1c1c1c"></div>
<div style="position:absolute;left:770px;top:135.0px;font-size:8.4px;line-height:8.4px;color:#d2d2d2;white-space:nowrap;-webkit-text-stroke:0.18px #d2d2d2;">Displacement</div>
<div style="position:absolute;left:753.7px;top:134.7px;width:6.6px;height:6.6px;border-radius:50%;background:#ababab;box-shadow:0 0 0 0.9px #1c1c1c"></div>
<div style="position:absolute;left:0.5px;top:17px;width:9px;height:11px;background:rgba(20,20,20,0.45);filter:blur(1.2px);border-radius:2px"></div>
<svg style="position:absolute;left:0.6px;top:18.4px" width="8" height="8"><path d="M4 1.2 V6.8 M1.2 4 H6.8" stroke="#a8a8a8" stroke-width="1.4"/></svg>
<div style="position:absolute;left:24.5px;top:379.3px;font-size:8.9px;line-height:8.9px;color:#e0e0e0;white-space:nowrap;-webkit-text-stroke:0.18px #e0e0e0;-webkit-text-stroke:0.1px #e0e0e0">CombineNormals</div>
<div style="position:absolute;left:1022.6px;top:6px;width:1.4px;height:391px;background:#474747"></div>
<div style="position:absolute;left:4.5px;top:397.6px;width:1012.5px;height:9.6px;border-radius:5px;background:linear-gradient(#404040,#4e4e4e)"></div>
<div style="position:absolute;left:0px;top:407.2px;width:1024px;height:1px;background:#353535"></div>
<div style="position:absolute;left:0px;top:408.2px;width:1024px;height:2px;background:#424242"></div>
<div style="position:absolute;left:0px;top:410.2px;width:1024px;height:1.1px;background:#2c2c2c"></div>
<div style="position:absolute;left:0px;top:411.3px;width:1024px;height:1px;background:#4c4c4c"></div>
<div style="position:absolute;left:0px;top:412.3px;width:1024px;height:19.7px;background:#3d3d3d"></div>
<div style="position:absolute;left:40.2px;top:418.5px;font-size:9.4px;line-height:9.4px;color:#c4c4c4;white-space:nowrap;-webkit-text-stroke:0.18px #c4c4c4;">View</div>
<div style="position:absolute;left:77px;top:418.5px;font-size:9.4px;line-height:9.4px;color:#c4c4c4;white-space:nowrap;-webkit-text-stroke:0.18px #c4c4c4;">Select</div>
<div style="position:absolute;left:118px;top:418.5px;font-size:9.4px;line-height:9.4px;color:#c4c4c4;white-space:nowrap;-webkit-text-stroke:0.18px #c4c4c4;">Add</div>
<div style="position:absolute;left:149.8px;top:418.5px;font-size:9.4px;line-height:9.4px;color:#c4c4c4;white-space:nowrap;-webkit-text-stroke:0.18px #c4c4c4;">Node</div>
<svg style="position:absolute;left:0px;top:420px" width="12" height="12" viewBox="0 0 12 12"><path d="M-1 2 L9 12 M-1 6 L5 12 M-1 10 L1 12" stroke="#5a5a5a" stroke-width="0.9"/></svg>
<div style="position:absolute;left:7.5px;top:414.8px;width:23px;height:18px;border-radius:4px;background:#3f3f3f;box-shadow:inset 0 0 0 0.6px #333"></div>
<svg style="position:absolute;left:9px;top:415px" width="22" height="16" viewBox="0 0 22 16"><rect x="3.5" y="1.5" width="5.5" height="4.5" fill="#eee" stroke="#111" stroke-width="0.7"/><rect x="1" y="8.5" width="5.5" height="4.5" fill="#eee" stroke="#111" stroke-width="0.7"/><path d="M9.5 3.5 C13 3.5 13.5 10.5 7 10.5" stroke="#b8c0ff" stroke-width="1.3" fill="none"/><path d="M14.6 6 L16.5 3.4 L18.4 6 Z M14.6 9 L16.5 11.6 L18.4 9 Z" fill="#585858"/></svg>
<div style="position:absolute;left:180.5px;top:414.8px;width:47px;height:14.8px;border-radius:4px;background:#383838"></div>
<div style="position:absolute;left:181.9px;top:415px;width:14px;height:14.3px;border-radius:3px;background:#c98e48"></div>
<svg style="position:absolute;left:182.6px;top:415.8px" width="12.6" height="12.6" viewBox="-6.3 -6.3 12.6 12.6"><defs><radialGradient id="sg2" cx="35%" cy="30%" r="75%"><stop offset="0" stop-color="#ffffff"/><stop offset="0.45" stop-color="#e4dcdc"/><stop offset="1" stop-color="#b88a8a"/></radialGradient></defs><circle r="5.3" fill="url(#sg2)" stroke="#1e1414" stroke-width="0.8"/><path d="M0 -0.53 L5.034999999999999 -0.53 A5.3 5.3 0 0 1 0.53 5.034999999999999 Z" fill="#d8a8a8" opacity="0.75"/><circle cx="1.8549999999999998" cy="-1.325" r="1.5899999999999999" fill="#5a3030" opacity="0.55"/><circle cx="-1.5899999999999999" cy="2.385" r="1.484" fill="#6a4a4a" opacity="0.45"/></svg>
<svg style="position:absolute;left:197.5px;top:416px" width="14" height="12" viewBox="0 0 14 12"><rect x="3.5" y="3" width="9" height="8" fill="#9a9aa0" stroke="#333" stroke-width="0.6"/><rect x="1" y="0.8" width="9" height="8.5" fill="#b8bcc0" stroke="#333" stroke-width="0.6"/><path d="M6.5 1.5 L6.5 6.5 C6.5 8 4 8 4 6.5" stroke="#4050a0" stroke-width="1.3" fill="none"/></svg>
<svg style="position:absolute;left:215px;top:416.5px" width="11" height="11" viewBox="0 0 11 11"><rect x="0.5" y="0.5" width="10" height="10" fill="#e8e4e4"/><path d="M0.5 0.5h2.5v2.5h-2.5zM5.5 0.5h2.5v2.5h-2.5zM3 3h2.5v2.5h-2.5zM8 3h2.5v2.5h-2.5zM0.5 5.5h2.5v2.5h-2.5zM5.5 5.5h2.5v2.5h-2.5zM3 8h2.5v2.5h-2.5zM8 8h2.5v2.5h-2.5z" fill="#702020"/></svg>
<div style="position:absolute;left:233px;top:414.8px;width:48px;height:14.8px;border-radius:4px;background:#383838"></div>
<div style="position:absolute;left:234.2px;top:415px;width:14.8px;height:14.6px;border-radius:3px;background:#c98e48"></div>
<svg style="position:absolute;left:234.2px;top:415px" width="15" height="15" viewBox="0 0 15 15"><path d="M7.5 2 L12.5 4.5 L12.5 10.5 L7.5 13 L2.5 10.5 L2.5 4.5 Z" fill="#d99040" stroke="#4a2a08" stroke-width="0.9"/><path d="M2.5 4.5 L7.5 7 L12.5 4.5 L7.5 2 Z" fill="#fae0b8"/><path d="M2.5 4.5 L7.5 7 L7.5 13 L2.5 10.5 Z" fill="#f0c080"/></svg>
<svg style="position:absolute;left:251px;top:416.5px" width="12" height="12" viewBox="0 0 12 12"><circle cx="5.8" cy="5.8" r="5" fill="#8c9898" stroke="#333" stroke-width="0.6"/><path d="M2.5 4 Q4 2.5 5.5 4 T8 6 Q7 9 4.5 8.5" fill="#5a6a60" opacity="0.7"/></svg>
<svg style="position:absolute;left:266px;top:415px" width="16" height="15" viewBox="0 0 16 15"><path d="M2.5 12.5 L5.5 9.5" stroke="#a0a0a0" stroke-width="1.6" stroke-linecap="round"/><path d="M4.5 10.5 L11.5 2.8 C13 1.5 14.2 2.7 13.2 4.2 L6.3 12.2 Z" fill="#5c6e90" stroke="#2a3040" stroke-width="0.6"/></svg>
<div style="position:absolute;left:287.1px;top:414.8px;width:25px;height:14.8px;border-radius:4px 0 0 4px;background:#3a3a3a;box-shadow:inset 0 0 0 0.6px #333"></div>
<svg style="position:absolute;left:290.0px;top:416.4px" width="11.6" height="11.6" viewBox="-5.8 -5.8 11.6 11.6"><defs><radialGradient id="sg3" cx="35%" cy="30%" r="75%"><stop offset="0" stop-color="#ffffff"/><stop offset="0.45" stop-color="#e4dcdc"/><stop offset="1" stop-color="#b88a8a"/></radialGradient></defs><circle r="4.8" fill="url(#sg3)" stroke="#1e1414" stroke-width="0.8"/><path d="M0 -0.48 L4.56 -0.48 A4.8 4.8 0 0 1 0.48 4.56 Z" fill="#d8a8a8" opacity="0.75"/><circle cx="1.68" cy="-1.2" r="1.44" fill="#5a3030" opacity="0.55"/><circle cx="-1.44" cy="2.16" r="1.344" fill="#6a4a4a" opacity="0.45"/></svg>
<svg style="position:absolute;left:304.2px;top:417px" width="6" height="11"><path d="M0.8 4.3 L3 1.5 L5.2 4.3 Z M0.8 6.7 L3 9.5 L5.2 6.7 Z" fill="#5a5a5a"/></svg>
<div style="position:absolute;left:312px;top:414.8px;width:96.2px;height:14.8px;background:#8d949b"></div>
<div style="position:absolute;left:317.7px;top:419.2px;font-size:9px;line-height:9px;color:#1a1a1a;white-space:nowrap;-webkit-text-stroke:0.18px #1a1a1a;">CombineNormals</div>
<div style="position:absolute;left:408.5px;top:414.8px;width:15.5px;height:14.8px;border-radius:0 4px 4px 0;background:#4b4b4b"></div>
<div style="position:absolute;left:413.5px;top:419.3px;font-size:8.8px;line-height:8.8px;color:#8a8a8a;white-space:nowrap;-webkit-text-stroke:0.18px #8a8a8a;">F</div>
<div style="position:absolute;left:425px;top:414.8px;width:31px;height:14.8px;border-radius:4px;background:#383838"></div>
<svg style="position:absolute;left:426px;top:415.5px" width="14" height="14" viewBox="0 0 14 14"><path d="M7 2.5 V11.5 M2.5 7 H11.5" stroke="#f0f0f0" stroke-width="1.6"/></svg>
<svg style="position:absolute;left:442px;top:415.5px" width="14" height="14" viewBox="0 0 14 14"><path d="M3 3 L11 11 M11 3 L3 11" stroke="#f0f0f0" stroke-width="1.6"/></svg>
<div style="position:absolute;left:464.4px;top:418px;width:9.8px;height:9.6px;border-radius:2px;background:#c98a48"></div>
<svg style="position:absolute;left:463px;top:414.5px" width="14" height="14" viewBox="0 0 14 14"><path d="M3.5 8 L6.5 10.5 L12 3" stroke="#f8f8f8" stroke-width="1.4" fill="none"/></svg>
<div style="position:absolute;left:481.5px;top:419.7px;font-size:8.8px;line-height:8.8px;color:#dadada;white-space:nowrap;-webkit-text-stroke:0.18px #dadada;">Use Nodes</div>
<div style="position:absolute;left:535.9px;top:414.7px;width:15.2px;height:14.5px;border-radius:3px;background:#4a4a4a"></div>
<svg style="position:absolute;left:534px;top:413px" width="18" height="18" viewBox="0 0 18 18"><path d="M4.5 14.3 L8 10.8" stroke="#d0d0d0" stroke-width="1.6" stroke-linecap="round"/><path d="M6.2 8.6 L9.6 12 L10.6 11 L10.2 9.6 L12.6 7.2 L13.8 7.6 L14.4 7 L11 3.6 L10.4 4.2 L10.8 5.4 L8.4 7.8 L7 7.4 Z" fill="#e8e8e8"/></svg>
<svg style="position:absolute;left:556.5px;top:415.5px" width="14" height="13" viewBox="0 0 14 13"><path d="M2.3 5.6 L5.5 2.4 L8.7 5.6 M5.5 2.6 V10.6 H12" stroke="#b4b4b4" stroke-width="1.5" fill="none"/></svg>
<div style="position:absolute;left:585.5px;top:414.7px;width:14.4px;height:14.8px;border-radius:3px;background:#c98e48"></div>
<svg style="position:absolute;left:585.5px;top:414.7px" width="15" height="15" viewBox="0 0 15 15"><path d="M4 2.5 H11 L11.5 6.5 H3.5 Z" fill="#f4f4f4"/><path d="M2.5 5.5 L7.5 10.5 L12.5 5.5" stroke="#2a2a2a" stroke-width="1.3" fill="none"/><rect x="2" y="10.5" width="3.2" height="3" fill="#f4f4f4"/><rect x="9.8" y="10.5" width="3.2" height="3" fill="#f4f4f4"/></svg>
<div style="position:absolute;left:607.4px;top:414.8px;width:13px;height:14.4px;border-radius:3px 0 0 3px;background:#474747"></div>
<svg style="position:absolute;left:604px;top:413px" width="18" height="18" viewBox="0 0 18 18"><path d="M5.2 9.3 L8 6.1 A3.5 3.5 0 0 1 12.9 11 L9.7 13.8" stroke="#a8a8a8" stroke-width="1.7" fill="none"/></svg>
<div style="position:absolute;left:621px;top:414.8px;width:26.8px;height:14.4px;border-radius:0 3px 3px 0;background:#3b3b3b"></div>
<svg style="position:absolute;left:621px;top:413px" width="22" height="18" viewBox="0 0 22 18"><path d="M8.4 9 V14.8 M13.5 4 V14.8 M11.3 7.4 H15.3 M4.6 12.4 H15.3" stroke="#e4e4d8" stroke-width="1"/><circle cx="7.5" cy="6.3" r="2.6" fill="#7d8de0" stroke="#e8ecff" stroke-width="0.9"/></svg>
<svg style="position:absolute;left:641.5px;top:416.8px" width="6" height="11"><path d="M0.8 4.3 L3 1.5 L5.2 4.3 Z M0.8 6.7 L3 9.5 L5.2 6.7 Z" fill="#5a5a5a"/></svg>
<div style="position:absolute;left:654.5px;top:414.8px;width:30px;height:14.1px;border-radius:4px;background:#383838"></div>
<svg style="position:absolute;left:655px;top:415px" width="30" height="14" viewBox="0 0 30 14"><rect x="6" y="2.5" width="7" height="8.5" fill="#c8bc98"/><path d="M8 2.5 L9.5 1 L11 2.5 Z" fill="#f0f0f0"/><path d="M2 12.5 L6.5 8 M3.5 8 H6.5 V11" stroke="#f0f0f0" stroke-width="1.1" fill="none"/><rect x="16.5" y="2.5" width="7" height="8.5" fill="#c8bc98"/><path d="M18.5 2.5 L20 1 L21.5 2.5 Z" fill="#f0f0f0"/><path d="M23 8.5 L27.5 13 M27.5 10 V13 H24.5" stroke="#f0f0f0" stroke-width="1.1" fill="none"/></svg>
</div></body></html>
